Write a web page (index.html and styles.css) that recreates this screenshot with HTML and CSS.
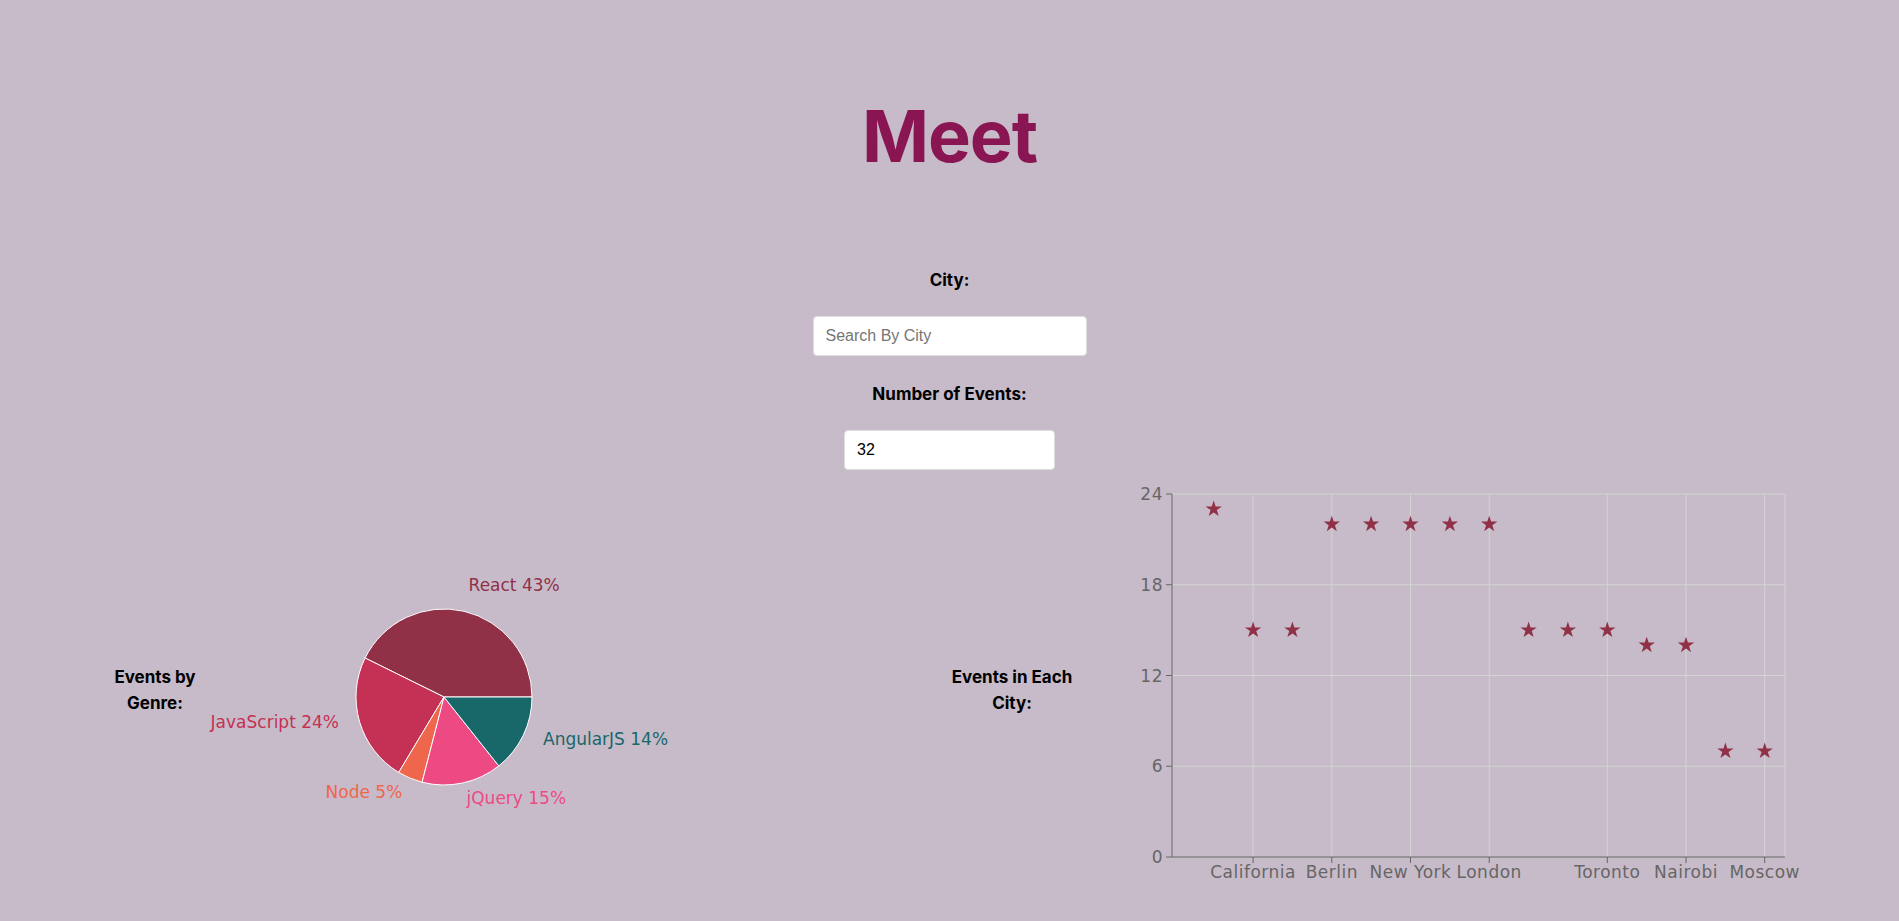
FILE: index.html
```html
<!DOCTYPE html>
<html lang="en">
<head>
<meta charset="utf-8">
<title>Meet</title>
<link rel="stylesheet" href="styles.css">
</head>
<body>
<div class="app">
  <h1 class="title">Meet</h1>
  <div class="search">
    <label class="field-label field-label-city" for="city">City:</label>
    <input id="city" class="input city-input" type="text" placeholder="Search By City">
    <label class="field-label field-label-num" for="num">Number of Events:</label>
    <input id="num" class="input num-input" type="text" value="32">
  </div>
  <div class="charts">
    <div class="chart-col">
      <h4 class="chart-label">Events by Genre:</h4>
      <svg class="chart pie" width="727" height="420" viewBox="0 0 727 420">
        <g class="sectors">
          <path class="s-react" d="M224,217 L312,217 A88,88 0 0 0 145.1,178 Z"/>
          <path class="s-js" d="M224,217 L145.1,178 A88,88 0 0 0 178.7,292.4 Z"/>
          <path class="s-node" d="M224,217 L178.7,292.4 A88,88 0 0 0 202.1,302.2 Z"/>
          <path class="s-jquery" d="M224,217 L202.1,302.2 A88,88 0 0 0 278.8,285.9 Z"/>
          <path class="s-angular" d="M224,217 L278.8,285.9 A88,88 0 0 0 312,217 Z"/>
        </g>
        <text class="pie-label t-react" x="248.6" y="111" text-anchor="start">React 43%</text>
        <text class="pie-label t-js" x="119" y="248" text-anchor="end">JavaScript 24%</text>
        <text class="pie-label t-node" x="182.3" y="318" text-anchor="end">Node 5%</text>
        <text class="pie-label t-jquery" x="246.5" y="324" text-anchor="start">jQuery 15%</text>
        <text class="pie-label t-angular" x="323" y="265" text-anchor="start">AngularJS 14%</text>
      </svg>
    </div>
    <div class="chart-col">
      <h4 class="chart-label">Events in Each City:</h4>
      <svg class="chart scatter" width="822" height="420" viewBox="0 0 822 420">
        <defs>
          <path id="star" d="M0,-8.6 L1.93,-2.66 L8.18,-2.66 L3.12,1.01 L5.05,6.96 L0,3.28 L-5.05,6.96 L-3.12,1.01 L-8.18,-2.66 L-1.93,-2.66 Z"/>
        </defs>
        <g class="grid">
          <line x1="95" y1="14" x2="708" y2="14"/>
          <line x1="95" y1="104.75" x2="708" y2="104.75"/>
          <line x1="95" y1="195.5" x2="708" y2="195.5"/>
          <line x1="95" y1="286.25" x2="708" y2="286.25"/>
          <line x1="176.1" y1="14" x2="176.1" y2="377"/>
          <line x1="254.8" y1="14" x2="254.8" y2="377"/>
          <line x1="333.5" y1="14" x2="333.5" y2="377"/>
          <line x1="412.2" y1="14" x2="412.2" y2="377"/>
          <line x1="530.3" y1="14" x2="530.3" y2="377"/>
          <line x1="609" y1="14" x2="609" y2="377"/>
          <line x1="687.7" y1="14" x2="687.7" y2="377"/>
          <line x1="708" y1="14" x2="708" y2="377"/>
        </g>
        <g class="axis">
          <line x1="95" y1="14" x2="95" y2="377"/>
          <line x1="95" y1="377" x2="708" y2="377"/>
          <line x1="89" y1="14" x2="95" y2="14"/>
          <line x1="89" y1="104.75" x2="95" y2="104.75"/>
          <line x1="89" y1="195.5" x2="95" y2="195.5"/>
          <line x1="89" y1="286.25" x2="95" y2="286.25"/>
          <line x1="89" y1="377" x2="95" y2="377"/>
          <line x1="176.1" y1="377" x2="176.1" y2="383"/>
          <line x1="254.8" y1="377" x2="254.8" y2="383"/>
          <line x1="333.5" y1="377" x2="333.5" y2="383"/>
          <line x1="412.2" y1="377" x2="412.2" y2="383"/>
          <line x1="530.3" y1="377" x2="530.3" y2="383"/>
          <line x1="609" y1="377" x2="609" y2="383"/>
          <line x1="687.7" y1="377" x2="687.7" y2="383"/>
        </g>
        <g class="tick-text y-ticks">
          <text x="86" y="20">24</text>
          <text x="86" y="110.75">18</text>
          <text x="86" y="201.5">12</text>
          <text x="86" y="292.25">6</text>
          <text x="86" y="383">0</text>
        </g>
        <g class="tick-text x-ticks">
          <text x="176.1" y="398">California</text>
          <text x="254.8" y="398">Berlin</text>
          <text x="333.5" y="398">New York</text>
          <text x="412.2" y="398">London</text>
          <text x="530.3" y="398">Toronto</text>
          <text x="609" y="398">Nairobi</text>
          <text x="687.7" y="398">Moscow</text>
        </g>
        <g class="points">
          <use href="#star" x="136.7" y="29.1"/>
          <use href="#star" x="176.1" y="150.1"/>
          <use href="#star" x="215.4" y="150.1"/>
          <use href="#star" x="254.8" y="44.25"/>
          <use href="#star" x="294.1" y="44.25"/>
          <use href="#star" x="333.5" y="44.25"/>
          <use href="#star" x="372.9" y="44.25"/>
          <use href="#star" x="412.2" y="44.25"/>
          <use href="#star" x="451.6" y="150.1"/>
          <use href="#star" x="490.9" y="150.1"/>
          <use href="#star" x="530.3" y="150.1"/>
          <use href="#star" x="569.7" y="165.25"/>
          <use href="#star" x="609" y="165.25"/>
          <use href="#star" x="648.4" y="271.1"/>
          <use href="#star" x="687.7" y="271.1"/>
        </g>
      </svg>
    </div>
  </div>
</div>
</body>
</html>
```
FILE: styles.css
```css
* {
  box-sizing: border-box;
}

html,
body {
  margin: 0;
  padding: 0;
}

body {
  background: #c7bbc9;
  font-family: Inter, "Liberation Sans", sans-serif;
  color: #000;
}

.app {
  display: flex;
  flex-direction: column;
}

.title {
  margin: 100px 0 0;
  text-align: center;
  font-size: 72px;
  line-height: 72px;
  font-weight: 700;
  color: #891652;
  letter-spacing: -1px;
}

.search {
  display: flex;
  flex-direction: column;
  align-items: center;
}

.field-label {
  display: block;
  font-weight: 700;
  font-size: 17px;
  line-height: 20px;
}

.field-label-city {
  margin: 98px 0 26px;
}

.field-label-num {
  margin: 28px 0 26px;
}

.input {
  height: 40px;
  border: 1px solid #dedede;
  border-radius: 4px;
  background: #fff;
  padding: 0 12px;
  font-family: "Liberation Sans", Arial, sans-serif;
  font-size: 16px;
  color: #000;
  outline: none;
}

.input::placeholder {
  color: #757575;
}

.city-input {
  width: 274px;
}

.num-input {
  width: 211px;
}

.charts {
  display: grid;
  grid-template-columns: 857px 952px;
  padding-left: 90px;
  margin-top: 10px;
  height: 420px;
}

.chart-col {
  display: flex;
  align-items: center;
}

.chart-label {
  flex: 0 0 130px;
  width: 130px;
  margin: 0;
  text-align: center;
  font-size: 17px;
  line-height: 26px;
  font-weight: 700;
}

.chart {
  display: block;
  flex: none;
  align-self: flex-start;
  overflow: visible;
}

.sectors path {
  stroke: #fff;
  stroke-width: 1;
}

.s-react { fill: #903147; }
.s-js { fill: #c53154; }
.s-node { fill: #ee664b; }
.s-jquery { fill: #ed4a84; }
.s-angular { fill: #186769; }

.pie-label {
  font-family: "DejaVu Sans", sans-serif;
  font-size: 17px;
}

.t-react { fill: #903147; }
.t-js { fill: #c53154; }
.t-node { fill: #ee664b; }
.t-jquery { fill: #ed4a84; }
.t-angular { fill: #186769; }

.grid line {
  stroke: #d3d3d3;
  stroke-width: 1;
}

.axis line {
  stroke: #666;
  stroke-width: 1;
}

.tick-text {
  font-family: "DejaVu Sans", sans-serif;
  font-size: 17px;
  fill: #666;
  letter-spacing: 0.5px;
}

.y-ticks text {
  text-anchor: end;
}

.x-ticks text {
  text-anchor: middle;
}

.points use {
  fill: #903147;
}
```
